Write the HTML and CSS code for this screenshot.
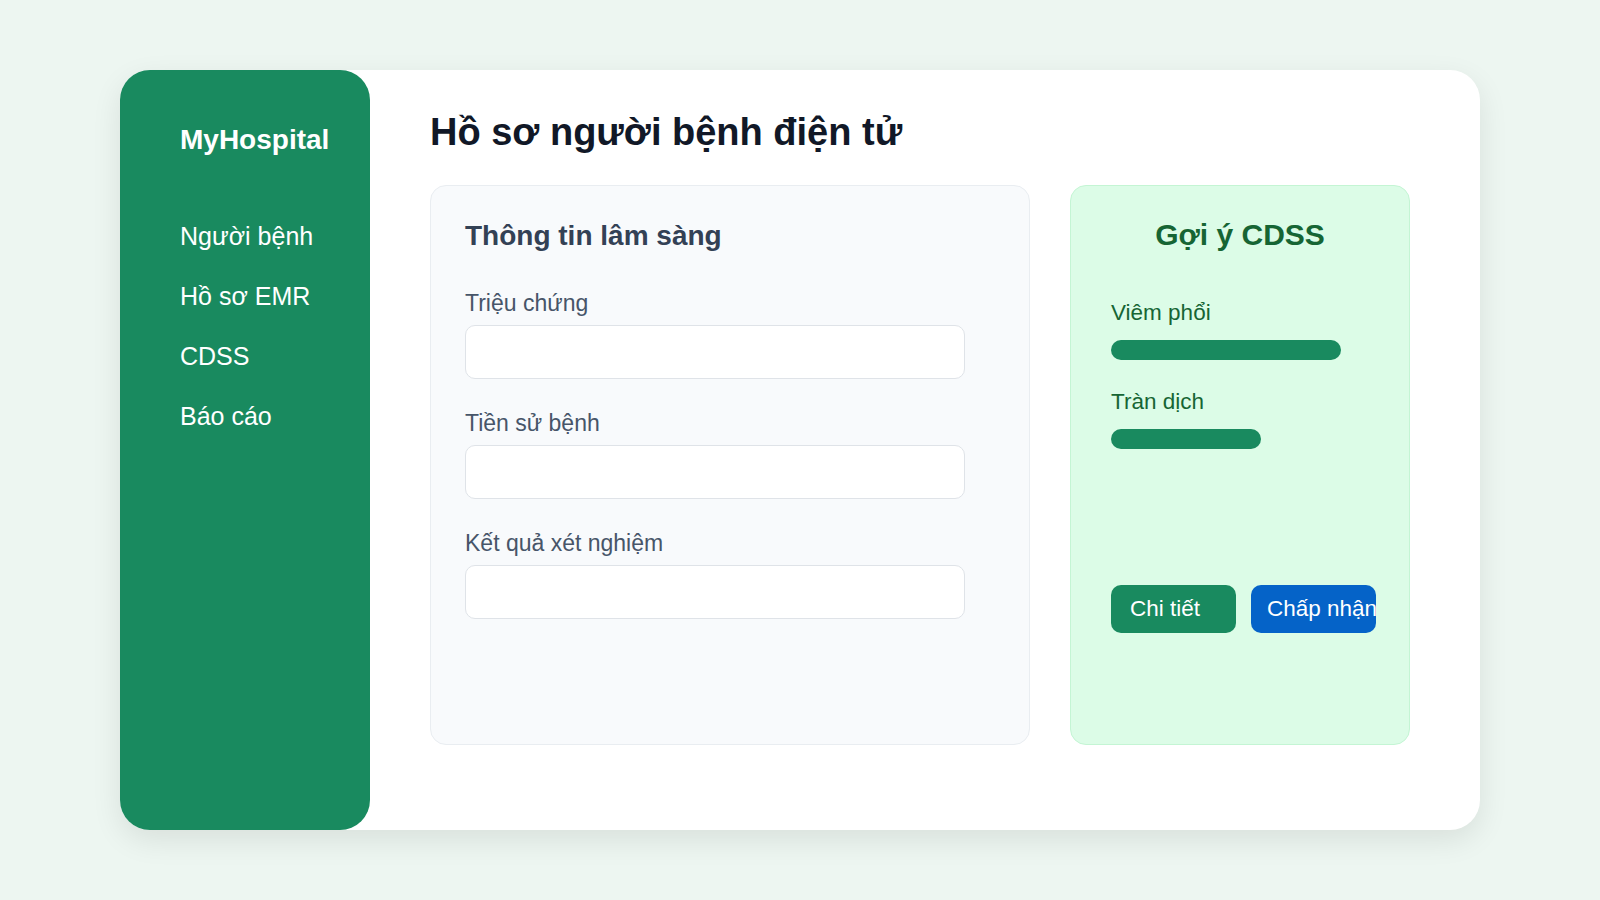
FILE: index.html
```html
<!DOCTYPE html>
<html lang="vi">

<head>
    <meta charset="UTF-8">
    <title>MyHospital – Hồ sơ người bệnh điện tử</title>
    <link rel="stylesheet" href="styles.css">
</head>

<body>

    <div class="app">
        <aside class="sidebar">
            <div class="brand">MyHospital</div>
            <nav class="nav">
                <a href="#">Người bệnh</a>
                <a href="#">Hồ sơ EMR</a>
                <a href="#">CDSS</a>
                <a href="#">Báo cáo</a>
            </nav>
        </aside>

        <main class="main">
            <h1>Hồ sơ người bệnh điện tử</h1>

            <div class="panels">
                <section class="clinical">
                    <h2>Thông tin lâm sàng</h2>

                    <div class="field">
                        <label for="symptoms">Triệu chứng</label>
                        <input type="text" id="symptoms">
                    </div>
                    <div class="field">
                        <label for="history">Tiền sử bệnh</label>
                        <input type="text" id="history">
                    </div>
                    <div class="field">
                        <label for="labs">Kết quả xét nghiệm</label>
                        <input type="text" id="labs">
                    </div>
                </section>

                <section class="cdss">
                    <h2>Gợi ý CDSS</h2>

                    <div class="suggestion">
                        <div class="suggestion-name">Viêm phổi</div>
                        <div class="bar" style="width: 230px;"></div>
                    </div>
                    <div class="suggestion">
                        <div class="suggestion-name">Tràn dịch</div>
                        <div class="bar" style="width: 150px;"></div>
                    </div>

                    <div class="actions">
                        <button class="btn">Chi tiết</button>
                        <button class="btn btn-blue">Chấp nhận</button>
                    </div>
                </section>
            </div>
        </main>
    </div>

</body>

</html>
```

FILE: styles.css
```css
body {
    margin: 0;
    height: 900px;
    font-family: 'Liberation Sans', Arial, sans-serif;
    background: #edf6f1;
    display: flex;
    align-items: center;
    justify-content: center;
}

.app {
    width: 1360px;
    height: 760px;
    display: flex;
    background: white;
    border-radius: 30px;
    box-shadow: 0 10px 30px rgba(0, 0, 0, 0.09);
}

.sidebar {
    width: 250px;
    flex-shrink: 0;
    box-sizing: border-box;
    padding: 54px 0 0 60px;
    background: #198a5f;
    border-radius: 30px;
    color: white;
}

.brand {
    font-size: 28px;
    line-height: 32px;
    font-weight: bold;
    white-space: nowrap;
}

.nav {
    display: flex;
    flex-direction: column;
    gap: 30px;
    margin-top: 65px;
}

.nav a {
    color: white;
    text-decoration: none;
    font-size: 25px;
    line-height: 30px;
}

.main {
    flex: 1;
    padding: 40px 70px 0 60px;
}

h1 {
    margin: 0 0 31px;
    font-size: 38px;
    line-height: 44px;
    color: #111827;
}

.panels {
    display: flex;
    gap: 40px;
}

.clinical {
    width: 600px;
    height: 560px;
    box-sizing: border-box;
    padding: 34px 34px;
    background: #f8fafc;
    border: 1px solid #e9edf1;
    border-radius: 16px;
}

.clinical h2 {
    margin: 0 0 38px;
    font-size: 28px;
    line-height: 32px;
    color: #334155;
}

.field {
    margin-bottom: 31px;
}

.field label {
    display: block;
    margin-bottom: 9px;
    font-size: 23px;
    line-height: 26px;
    color: #475569;
}

.field input {
    display: block;
    width: 500px;
    height: 54px;
    box-sizing: border-box;
    border: 1px solid #dfe3e8;
    border-radius: 10px;
    background: white;
    font-size: 20px;
    padding: 0 15px;
}

.cdss {
    width: 340px;
    height: 560px;
    box-sizing: border-box;
    padding: 32px 40px;
    background: #dcfce7;
    border: 1px solid #c4f5d4;
    border-radius: 16px;
    color: #166534;
}

.cdss h2 {
    margin: 0 0 48px;
    text-align: center;
    font-size: 30px;
    line-height: 34px;
}

.suggestion {
    margin-bottom: 29px;
}

.suggestion-name {
    font-size: 22.5px;
    line-height: 26px;
    margin-bottom: 14px;
}

.bar {
    height: 20px;
    border-radius: 10px;
    background: #198a5f;
}

.actions {
    display: flex;
    gap: 15px;
    margin-top: 136px;
}

.btn {
    width: 125px;
    height: 48px;
    flex-shrink: 0;
    padding: 0 19px;
    border: none;
    border-radius: 10px;
    background: #198a5f;
    color: white;
    font-family: inherit;
    font-size: 22.5px;
    text-align: left;
    white-space: nowrap;
    overflow: hidden;
    cursor: pointer;
}

.btn-blue {
    padding-left: 16px;
    background: #0563c8;
}
```
